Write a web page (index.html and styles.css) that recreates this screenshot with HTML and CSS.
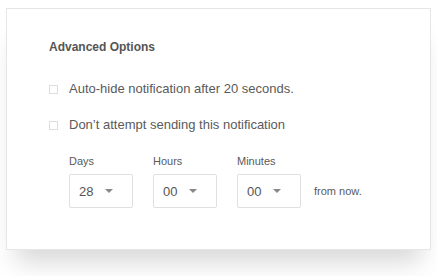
FILE: index.html
```html
<!DOCTYPE html>
<html>
<head>
<meta charset="utf-8">
<link rel="stylesheet" href="styles.css">
</head>
<body>
<div class="card">
  <h2 class="title">Advanced Options</h2>
  <label class="check"><span class="box"></span><span>Auto-hide notification after 20 seconds.</span></label>
  <label class="check"><span class="box"></span><span>Don’t attempt sending this notification</span></label>
  <div class="times">
    <div class="field">
      <div class="lbl">Days</div>
      <div class="select"><span>28</span><span class="caret"></span></div>
    </div>
    <div class="field">
      <div class="lbl">Hours</div>
      <div class="select"><span>00</span><span class="caret"></span></div>
    </div>
    <div class="field">
      <div class="lbl">Minutes</div>
      <div class="select"><span>00</span><span class="caret"></span></div>
    </div>
    <div class="now">from now.</div>
  </div>
</div>
</body>
</html>
```
FILE: styles.css
```css
html, body { margin: 0; padding: 0; background: #fff; }
body {
  font-family: "Liberation Sans", Arial, sans-serif;
  color: #555;
  padding: 8px 7px 0 6px;
  height: 268px;
}
.card {
  width: 423px;
  height: 240px;
  box-sizing: content-box;
  border: 1px solid #e6e6e6;
  background: #fff;
  box-shadow: 0 22px 24px -10px rgba(0,0,0,0.16);
  padding: 0;
}
.title {
  margin: 31px 0 0 42px;
  font-size: 12px;
  font-weight: bold;
  color: #555;
  line-height: 14px;
}
.check {
  display: flex;
  align-items: center;
  margin: 27px 0 0 42px;
  font-size: 13px;
  line-height: 16px;
  color: #5a5a5a;
}
.check + .check { margin-top: 20px; }
.box {
  width: 7px;
  height: 7px;
  border: 1px solid #ddd;
  margin-right: 11px;
}
.times {
  display: flex;
  align-items: flex-end;
  gap: 20px;
  margin: 22px 0 0 62px;
}
.lbl {
  font-size: 11px;
  line-height: 13px;
  color: #5a5a5a;
  margin-bottom: 6px;
}
.select {
  height: 32px;
  border: 1px solid #e0e0e0;
  border-radius: 2px;
  display: flex;
  align-items: center;
  justify-content: space-between;
  padding: 0 19px 0 9px;
  box-sizing: content-box;
  width: 34px;
  font-size: 13px;
  color: #555;
}
.caret {
  width: 0;
  height: 0;
  border-left: 4px solid transparent;
  border-right: 4px solid transparent;
  border-top: 4px solid #888;
}
.now {
  font-size: 11px;
  color: #5a5a5a;
  height: 34px;
  line-height: 34px;
  margin-left: -7px;
}
```
